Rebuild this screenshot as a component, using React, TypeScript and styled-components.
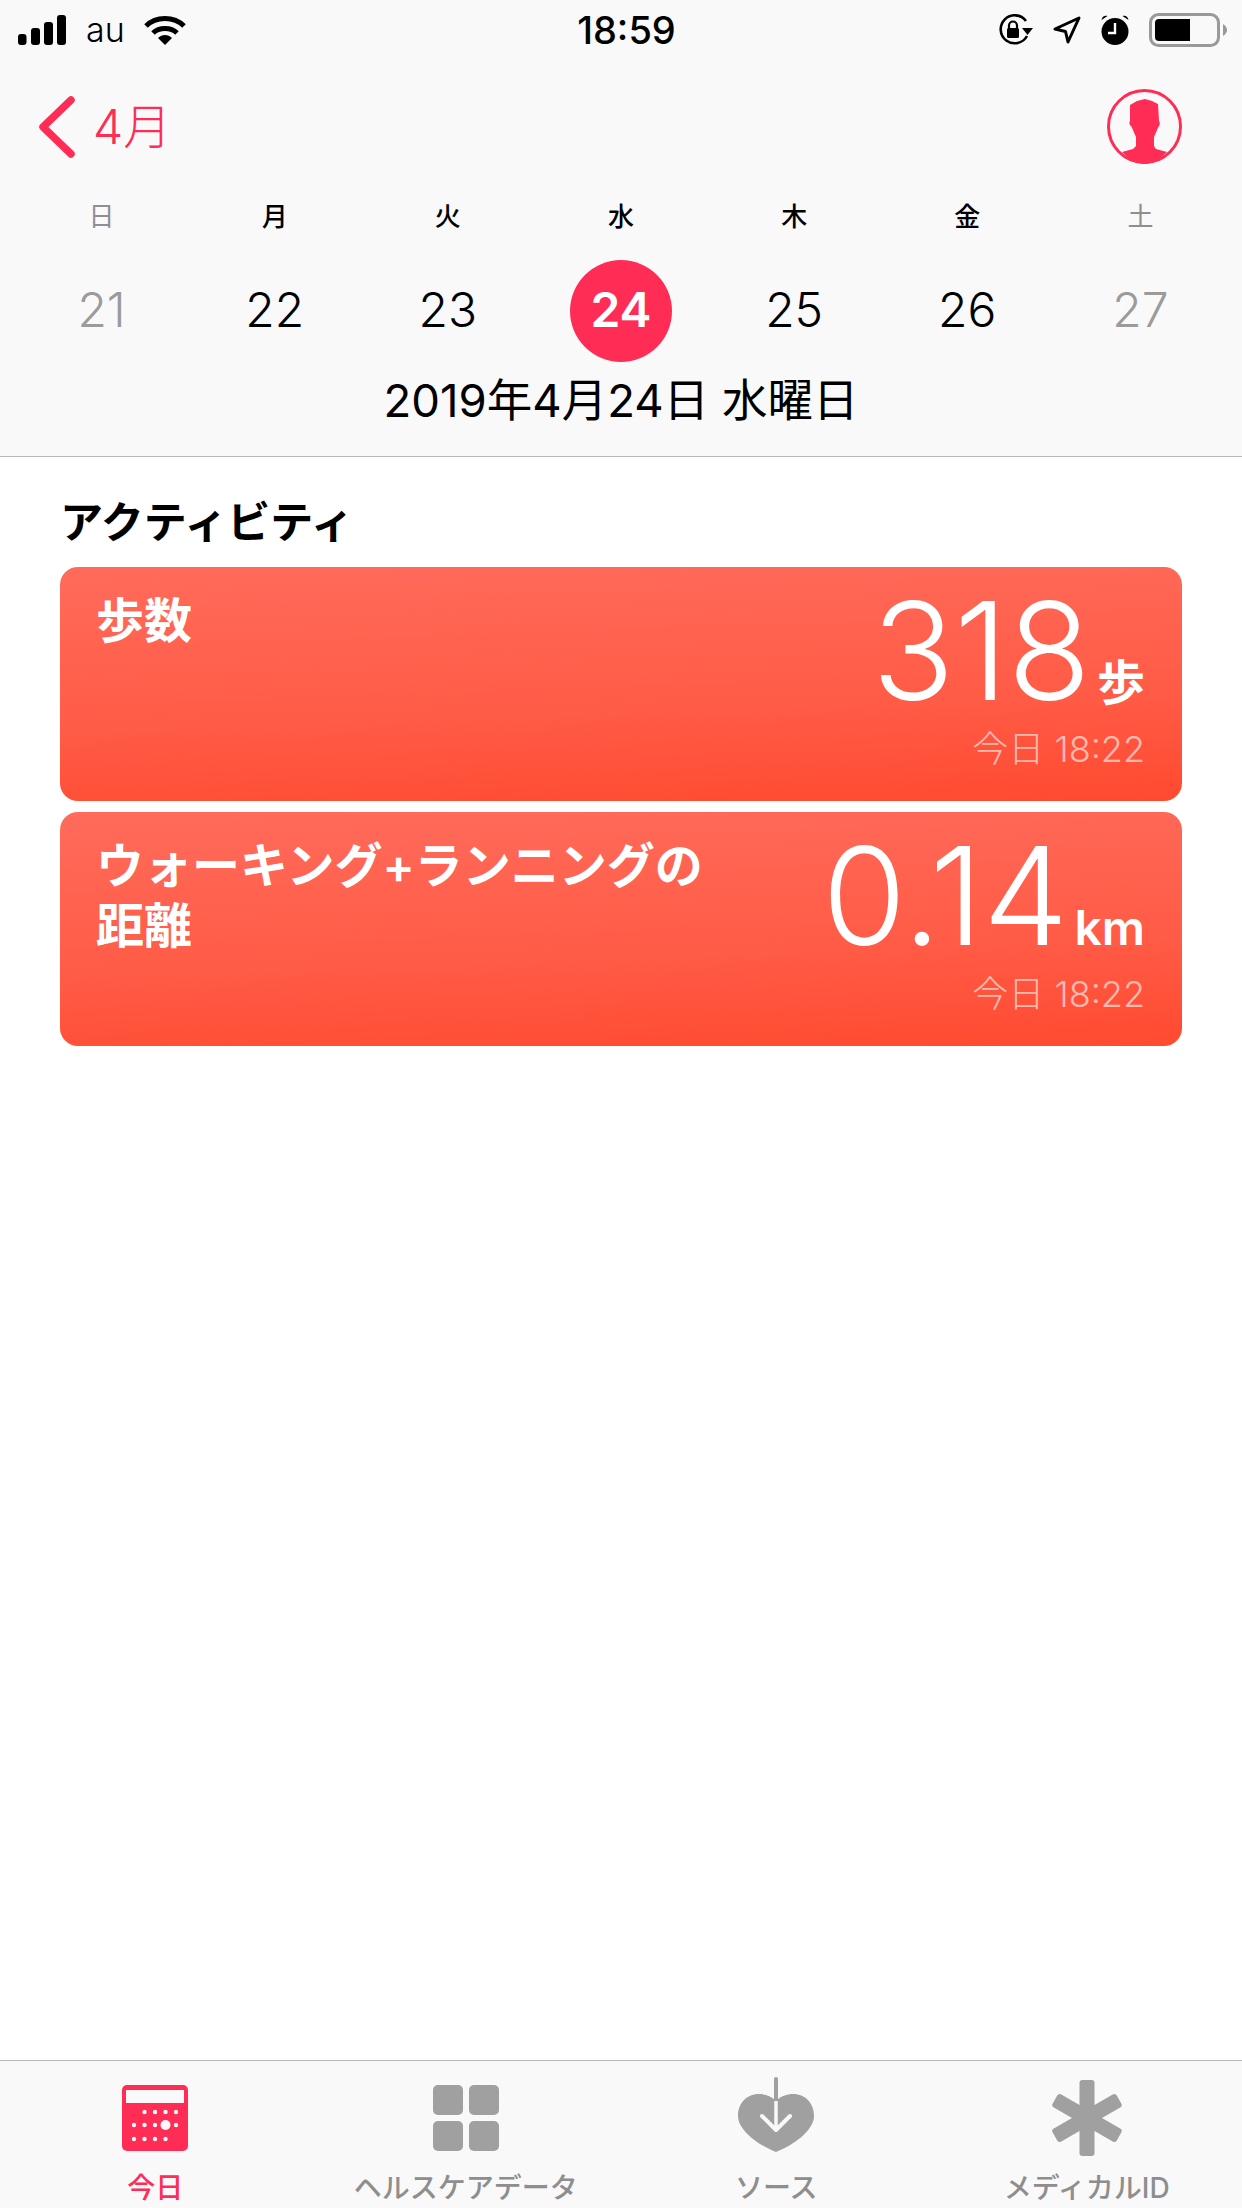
import { FC } from 'react';
import styled, { createGlobalStyle } from 'styled-components';

const PINK = '#ff2d55';
const GRAY = '#a0a0a0';

const GlobalStyle = createGlobalStyle`
  html, body {
    margin: 0;
    padding: 0;
    background: #fff;
  }
  body {
    font-family: Inter, "Noto Sans CJK JP", sans-serif;
    color: #000;
  }
`;

const Screen = styled.div`
  width: 1242px;
  height: 2208px;
  display: flex;
  flex-direction: column;
  overflow: hidden;
  background: #fff;
`;

const Header = styled.header`
  height: 457px;
  box-sizing: border-box;
  background: #f9f9f9;
  border-bottom: 1px solid #b8b8b8;
`;

const StatusBar = styled.div`
  height: 60px;
  display: grid;
  grid-template-columns: 1fr auto 1fr;
  align-items: center;
  padding: 0 15px 0 18px;
`;

const StatusLeft = styled.div`
  display: flex;
  align-items: center;
`;

const Carrier = styled.span`
  margin: 0 19px 0 20px;
  font-size: 34px;
  font-weight: 300;
  line-height: 36px;
`;

const Clock = styled.div`
  margin-left: 8px;
  font-size: 38px;
  font-weight: 500;
  line-height: 40px;
`;

const StatusRight = styled.div`
  display: flex;
  align-items: center;
  justify-content: flex-end;
  gap: 20px;
`;

const NavRow = styled.div`
  display: flex;
  align-items: center;
  justify-content: space-between;
  height: 75px;
  padding: 29px 60px 0 38px;
`;

const BackLink = styled.div`
  display: flex;
  align-items: center;
  gap: 17px;
  color: ${PINK};
  font-size: 48px;
  font-weight: 300;
  line-height: 62px;
`;

const WeekGrid = styled.div`
  display: grid;
  grid-template-columns: repeat(7, 1fr);
  padding: 0 15px;
`;

const WeekdayRow = styled(WeekGrid)`
  margin-top: 37px;
`;

const DateRow = styled(WeekGrid)`
  margin-top: 27px;
`;

const Weekday = styled.div<{ $muted?: boolean }>`
  text-align: center;
  font-size: 26px;
  line-height: 32px;
  font-weight: ${({ $muted }) => ($muted ? 400 : 500)};
  color: ${({ $muted }) => ($muted ? '#8e8e93' : '#000')};
`;

const DayCell = styled.div`
  display: flex;
  justify-content: center;
`;

const DayNumber = styled.div<{ $muted?: boolean; $active?: boolean }>`
  width: 102px;
  height: 102px;
  padding-bottom: 3px;
  box-sizing: border-box;
  border-radius: 50%;
  display: flex;
  align-items: center;
  justify-content: center;
  font-size: 48px;
  font-weight: ${({ $active }) => ($active ? 600 : 350)};
  background: ${({ $active }) => ($active ? PINK : 'transparent')};
  color: ${({ $active, $muted }) => ($active ? '#fff' : $muted ? '#9b9b9b' : '#000')};
`;

const FullDate = styled.div`
  margin-top: 11px;
  text-align: center;
  font-size: 45.5px;
  font-weight: 400;
  line-height: 56px;
`;

const Main = styled.main`
  flex: 1;
  padding: 37px 60px 0;
`;

const SectionTitle = styled.h2`
  margin: 0 0 17px;
  font-size: 43px;
  font-weight: 700;
  line-height: 56px;
`;

const CardList = styled.div`
  display: flex;
  flex-direction: column;
  gap: 11px;
`;

const Card = styled.section`
  height: 234px;
  box-sizing: border-box;
  display: flex;
  justify-content: space-between;
  padding: 24px 37px 0 36px;
  border-radius: 18px;
  color: #fff;
  background: linear-gradient(178deg, #ff6b5b 0%, #ff5c47 58%, #ff4a30 100%);
`;

const CardTitle = styled.div`
  width: 620px;
  font-size: 48px;
  font-weight: 600;
  line-height: 60px;
`;

const Reading = styled.div`
  display: flex;
  flex-direction: column;
  align-items: flex-end;
  margin-top: 10px;
`;

const ValueRow = styled.div`
  display: flex;
  align-items: baseline;
  gap: 6px;
  height: 100px;
`;

const Value = styled.span`
  font-size: 136px;
  font-weight: 290;
  line-height: 100px;
  letter-spacing: 0;
`;

const Unit = styled.span`
  font-size: 48px;
  font-weight: 600;
  line-height: 100px;
`;

const Stamp = styled.div`
  margin-top: 28px;
  font-size: 36px;
  font-weight: 300;
  line-height: 40px;
  color: rgba(255, 255, 255, 0.62);
`;

const TabBar = styled.nav`
  height: 148px;
  box-sizing: border-box;
  display: grid;
  grid-template-columns: repeat(4, 1fr);
  padding-top: 16px;
  background: #f9f9f9;
  border-top: 1px solid #b8b8b8;
`;

const Tab = styled.div`
  display: flex;
  flex-direction: column;
  align-items: center;
`;

const TabIcon = styled.div<{ $lift?: number }>`
  height: 82px;
  display: flex;
  align-items: center;
  justify-content: center;
  padding-bottom: ${({ $lift }) => $lift || 0}px;
  box-sizing: border-box;
`;

const TabLabel = styled.div<{ $active?: boolean }>`
  margin-top: 11px;
  font-size: 28px;
  font-weight: 500;
  line-height: 36px;
  white-space: nowrap;
  color: ${({ $active }) => ($active ? PINK : '#8e8e8e')};
`;

const SignalIcon = () => (
  <svg width="48" height="30" viewBox="0 0 48 30">
    <rect x="0" y="19" width="8.5" height="11" rx="3" />
    <rect x="13" y="13" width="9" height="17" rx="3" />
    <rect x="26" y="7" width="9" height="23" rx="3" />
    <rect x="39" y="0" width="9" height="30" rx="3" />
  </svg>
);

const WifiIcon = () => (
  <svg width="42" height="30" viewBox="0 0 42 30" fill="none" stroke="#000" strokeWidth="5">
    <path d="M2 11 C12 1 30 1 40 11" />
    <path d="M9 18 C15 12 27 12 33 18" />
    <path d="M14 23 L21 30 L28 23 C24 19 18 19 14 23 Z" fill="#000" stroke="none" />
  </svg>
);

const RotationLockIcon = () => (
  <svg width="35" height="32" viewBox="0 0 35 32" fill="none">
    <path d="M29 22 A14 14 0 1 1 28 7" stroke="#000" strokeWidth="2.6" />
    <path d="M24 14 L35 14 L29.5 21 Z" fill="#000" />
    <rect x="9" y="14" width="12" height="10" rx="1.5" fill="#000" />
    <path d="M11 15 V11.5 A4 4 0 0 1 19 11.5 V15" stroke="#000" strokeWidth="2.2" />
  </svg>
);

const LocationIcon = () => (
  <svg width="28" height="28" viewBox="0 0 28 28" fill="none">
    <path d="M2 13 L26 2 L15 26 L12.5 15.5 Z" stroke="#000" strokeWidth="3" strokeLinejoin="round" />
  </svg>
);

const AlarmIcon = () => (
  <svg width="28" height="30" viewBox="0 0 28 30">
    <circle cx="14" cy="16.5" r="13.5" />
    <path d="M0.5 5 C1 1.5 4 0 6.5 1 Z M27.5 5 C27 1.5 24 0 21.5 1 Z" />
    <path d="M14 8 V18 H7" fill="none" stroke="#fff" strokeWidth="2.4" />
  </svg>
);

const BatteryIcon = () => (
  <svg width="78" height="34" viewBox="0 0 78 34">
    <rect x="1.5" y="1.5" width="68" height="31" rx="8" fill="none" stroke="#999" strokeWidth="3" />
    <path d="M10 6 H41 V28 H10 A4 4 0 0 1 6 24 V10 A4 4 0 0 1 10 6 Z" />
    <path d="M74 11 C77 13 78 15 78 17 C78 19 77 21 74 23 Z" fill="#999" />
  </svg>
);

const ChevronIcon = () => (
  <svg width="38" height="62" viewBox="0 0 38 62" fill="none">
    <path d="M33 4 L5 31 L33 58" stroke={PINK} strokeWidth="7.5" strokeLinecap="round" strokeLinejoin="round" />
  </svg>
);

const AvatarIcon = () => (
  <svg width="75" height="75" viewBox="0 0 75 75">
    <circle cx="37.5" cy="37.5" r="36" fill="none" stroke={PINK} strokeWidth="3" />
    <path
      fill={PINK}
      d="M38 10 L45 12 L51 15 L52 32 C53 33 53 36 52 37 C50 40 49 44 47 48 L47 57 L49 60 L60 63 C53 70 46 75 37.5 75 C29 75 22 70 15 63 L26 60 L29 57 L29 48 C27 44 26 40 24 37 C22 36 22 33 23 32 L23 16 L30 12 Z"
    />
  </svg>
);

const DOT_COLUMNS = [12, 22.5, 33, 43.5, 54];

const CalendarIcon = () => (
  <svg width="66" height="66" viewBox="0 0 66 66">
    <rect width="66" height="66" rx="5" fill={PINK} />
    <rect x="4" y="5" width="58" height="13" fill="#f9f9f9" />
    <g fill="#f9f9f9">
      {DOT_COLUMNS.slice(1).map(x => (
        <circle key={x} cx={x} cy="27" r="2.2" />
      ))}
      {DOT_COLUMNS.map((x, i) => (
        <circle key={x} cx={x} cy="40" r={i === 3 ? 5 : 2.2} />
      ))}
      {DOT_COLUMNS.slice(0, 4).map(x => (
        <circle key={x} cx={x} cy="54" r="2.2" />
      ))}
    </g>
  </svg>
);

const BrowseIcon = () => (
  <svg width="66" height="66" viewBox="0 0 66 66" fill={GRAY}>
    <rect width="30" height="30" rx="5" />
    <rect x="36" width="30" height="30" rx="5" />
    <rect y="36" width="30" height="30" rx="5" />
    <rect x="36" y="36" width="30" height="30" rx="5" />
  </svg>
);

const SourcesIcon = () => (
  <svg width="76" height="75" viewBox="0 0 76 75">
    <path
      fill={GRAY}
      d="M38 24 C33 19 27 17 21 17 C8 17 0 27 0 39 C0 53 20 68 38 75 C56 68 76 53 76 39 C76 27 68 17 55 17 C49 17 43 19 38 24 Z"
    />
    <path d="M38 2 V24" stroke={GRAY} strokeWidth="4" strokeLinecap="round" />
    <path d="M38 24 V52" stroke="#f9f9f9" strokeWidth="3.5" />
    <path d="M24 39 L38 53 L52 39" fill="none" stroke="#f9f9f9" strokeWidth="4" strokeLinecap="round" strokeLinejoin="round" />
  </svg>
);

const MedicalIcon = () => (
  <svg width="70" height="76" viewBox="0 0 70 76" fill={GRAY}>
    <rect x="27.5" y="0" width="15" height="76" rx="3" />
    <rect x="27.5" y="1" width="15" height="74" rx="3" transform="rotate(60 35 38)" />
    <rect x="27.5" y="1" width="15" height="74" rx="3" transform="rotate(-60 35 38)" />
  </svg>
);

const WEEK = [
  { name: '日', day: 21, muted: true },
  { name: '月', day: 22 },
  { name: '火', day: 23 },
  { name: '水', day: 24, active: true },
  { name: '木', day: 25 },
  { name: '金', day: 26 },
  { name: '土', day: 27, muted: true },
];

const CARDS = [
  { title: '歩数', value: '318', unit: '歩' },
  { title: 'ウォーキング+ランニングの距離', value: '0.14', unit: 'km' },
];

const App: FC = () => {
  return (
    <Screen>
      <GlobalStyle />
      <Header>
        <StatusBar>
          <StatusLeft>
            <SignalIcon />
            <Carrier>au</Carrier>
            <WifiIcon />
          </StatusLeft>
          <Clock>18:59</Clock>
          <StatusRight>
            <RotationLockIcon />
            <LocationIcon />
            <AlarmIcon />
            <BatteryIcon />
          </StatusRight>
        </StatusBar>
        <NavRow>
          <BackLink>
            <ChevronIcon />
            4月
          </BackLink>
          <AvatarIcon />
        </NavRow>
        <WeekdayRow>
          {WEEK.map(item => (
            <Weekday key={item.name} $muted={item.muted}>
              {item.name}
            </Weekday>
          ))}
        </WeekdayRow>
        <DateRow>
          {WEEK.map(item => (
            <DayCell key={item.day}>
              <DayNumber $muted={item.muted} $active={item.active}>
                {item.day}
              </DayNumber>
            </DayCell>
          ))}
        </DateRow>
        <FullDate>2019年4月24日 水曜日</FullDate>
      </Header>
      <Main>
        <SectionTitle>アクティビティ</SectionTitle>
        <CardList>
          {CARDS.map(card => (
            <Card key={card.title}>
              <CardTitle>{card.title}</CardTitle>
              <Reading>
                <ValueRow>
                  <Value>{card.value}</Value>
                  <Unit>{card.unit}</Unit>
                </ValueRow>
                <Stamp>今日 18:22</Stamp>
              </Reading>
            </Card>
          ))}
        </CardList>
      </Main>
      <TabBar>
        <Tab>
          <TabIcon>
            <CalendarIcon />
          </TabIcon>
          <TabLabel $active>今日</TabLabel>
        </Tab>
        <Tab>
          <TabIcon>
            <BrowseIcon />
          </TabIcon>
          <TabLabel>ヘルスケアデータ</TabLabel>
        </Tab>
        <Tab>
          <TabIcon $lift={7}>
            <SourcesIcon />
          </TabIcon>
          <TabLabel>ソース</TabLabel>
        </Tab>
        <Tab>
          <TabIcon>
            <MedicalIcon />
          </TabIcon>
          <TabLabel>メディカルID</TabLabel>
        </Tab>
      </TabBar>
    </Screen>
  );
};

export default App;
